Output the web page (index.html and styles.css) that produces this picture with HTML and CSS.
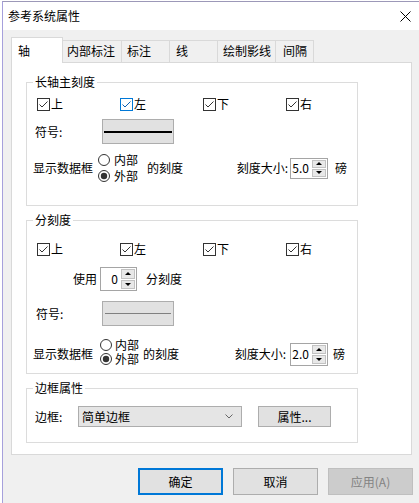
FILE: index.html
```html
<!DOCTYPE html>
<html lang="zh-CN">
<head>
<meta charset="utf-8">
<title>参考系统属性</title>
<link rel="stylesheet" href="styles.css">
</head>
<body>
<div class="window">
  <div class="titlebar">
    <span class="title">参考系统属性</span>
    <svg class="close" width="11" height="11" viewBox="0 0 11 11"><path d="M0.5 0.5 L10.5 10.5 M10.5 0.5 L0.5 10.5" stroke="#000" stroke-width="1" fill="none"/></svg>
  </div>
  <div class="client">
    <div class="tabs">
      <div class="tab active t-axis">轴</div>
      <div class="tab t-inner">内部标注</div>
      <div class="tab t-label">标注</div>
      <div class="tab t-line">线</div>
      <div class="tab t-hatch">绘制影线</div>
      <div class="tab t-gap">间隔</div>
    </div>
    <div class="panel">
      <div class="group g-major">
        <div class="legend">长轴主刻度</div>
        <div class="checks">
          <div class="chk"><svg width="13" height="13" viewBox="0 0 13 13"><rect x="0.5" y="0.5" width="12" height="12" fill="#fff" stroke="#333"/><path d="M2.5 6.5 L5 9 L10.5 3.5" stroke="#333" stroke-width="1" fill="none"/></svg><span>上</span></div>
          <div class="chk"><svg width="13" height="13" viewBox="0 0 13 13"><rect x="0.5" y="0.5" width="12" height="12" fill="#fff" stroke="#0078d7"/><path d="M2.5 6.5 L5 9 L10.5 3.5" stroke="#0a5fb4" stroke-width="1" fill="none"/></svg><span>左</span></div>
          <div class="chk"><svg width="13" height="13" viewBox="0 0 13 13"><rect x="0.5" y="0.5" width="12" height="12" fill="#fff" stroke="#333"/><path d="M2.5 6.5 L5 9 L10.5 3.5" stroke="#333" stroke-width="1" fill="none"/></svg><span>下</span></div>
          <div class="chk"><svg width="13" height="13" viewBox="0 0 13 13"><rect x="0.5" y="0.5" width="12" height="12" fill="#fff" stroke="#333"/><path d="M2.5 6.5 L5 9 L10.5 3.5" stroke="#333" stroke-width="1" fill="none"/></svg><span>右</span></div>
        </div>
        <div class="symbol">
          <span class="sym-lbl">符号:</span>
          <div class="linebox"><span class="line thick"></span></div>
        </div>
        <div class="tick">
          <span>显示数据框</span>
          <div class="radios">
            <div class="radio"><svg width="12" height="12" viewBox="0 0 12 12"><circle cx="6" cy="6" r="5.5" fill="#fff" stroke="#333"/></svg><span>内部</span></div>
            <div class="radio"><svg width="12" height="12" viewBox="0 0 12 12"><circle cx="6" cy="6" r="5.5" fill="#fff" stroke="#333"/><circle cx="6" cy="6" r="3.2" fill="#333"/></svg><span>外部</span></div>
          </div>
          <span class="of-tick">的刻度</span>
          <span class="size-lbl">刻度大小:</span>
          <div class="spin">
            <span class="val">5.0</span>
            <div class="spin-btns"><span class="sbtn"><i class="up"></i></span><span class="sbtn"><i class="dn"></i></span></div>
          </div>
          <span class="unit">磅</span>
        </div>
      </div>

      <div class="group g-minor">
        <div class="legend">分刻度</div>
        <div class="checks">
          <div class="chk"><svg width="13" height="13" viewBox="0 0 13 13"><rect x="0.5" y="0.5" width="12" height="12" fill="#fff" stroke="#333"/><path d="M2.5 6.5 L5 9 L10.5 3.5" stroke="#333" stroke-width="1" fill="none"/></svg><span>上</span></div>
          <div class="chk"><svg width="13" height="13" viewBox="0 0 13 13"><rect x="0.5" y="0.5" width="12" height="12" fill="#fff" stroke="#333"/><path d="M2.5 6.5 L5 9 L10.5 3.5" stroke="#333" stroke-width="1" fill="none"/></svg><span>左</span></div>
          <div class="chk"><svg width="13" height="13" viewBox="0 0 13 13"><rect x="0.5" y="0.5" width="12" height="12" fill="#fff" stroke="#333"/><path d="M2.5 6.5 L5 9 L10.5 3.5" stroke="#333" stroke-width="1" fill="none"/></svg><span>下</span></div>
          <div class="chk"><svg width="13" height="13" viewBox="0 0 13 13"><rect x="0.5" y="0.5" width="12" height="12" fill="#fff" stroke="#333"/><path d="M2.5 6.5 L5 9 L10.5 3.5" stroke="#333" stroke-width="1" fill="none"/></svg><span>右</span></div>
        </div>
        <div class="use">
          <span>使用</span>
          <div class="spin spin-use">
            <span class="val">0</span>
            <div class="spin-btns"><span class="sbtn"><i class="up"></i></span><span class="sbtn"><i class="dn"></i></span></div>
          </div>
          <span class="use-unit">分刻度</span>
        </div>
        <div class="symbol">
          <span class="sym-lbl">符号:</span>
          <div class="linebox"><span class="line thin"></span></div>
        </div>
        <div class="tick">
          <span>显示数据框</span>
          <div class="radios">
            <div class="radio"><svg width="12" height="12" viewBox="0 0 12 12"><circle cx="6" cy="6" r="5.5" fill="#fff" stroke="#333"/></svg><span>内部</span></div>
            <div class="radio"><svg width="12" height="12" viewBox="0 0 12 12"><circle cx="6" cy="6" r="5.5" fill="#fff" stroke="#333"/><circle cx="6" cy="6" r="3.2" fill="#333"/></svg><span>外部</span></div>
          </div>
          <span class="of-tick">的刻度</span>
          <span class="size-lbl">刻度大小:</span>
          <div class="spin spin-tall">
            <span class="val">2.0</span>
            <div class="spin-btns"><span class="sbtn"><i class="up"></i></span><span class="sbtn"><i class="dn"></i></span></div>
          </div>
          <span class="unit">磅</span>
        </div>
      </div>

      <div class="group g-border">
        <div class="legend">边框属性</div>
        <div class="border-row">
          <span class="bd-lbl">边框:</span>
          <div class="combo">
            <span>简单边框</span>
            <svg width="8" height="5" viewBox="0 0 8 5"><path d="M0.5 0.5 L4 4 L7.5 0.5" stroke="#666" stroke-width="1" fill="none"/></svg>
          </div>
          <div class="btn-prop">属性...</div>
        </div>
      </div>
    </div>
    <div class="buttons">
      <div class="btn default">确定</div>
      <div class="btn">取消</div>
      <div class="btn disabled">应用(A)</div>
    </div>
  </div>
</div>
</body>
</html>
```

FILE: styles.css
```css
* { box-sizing: border-box; }
html, body { margin: 0; padding: 0; }
body {
  width: 419px;
  height: 503px;
  overflow: hidden;
  background: #fff;
  color: #000;
  font-family: "Noto Sans CJK SC", "Microsoft YaHei", sans-serif;
  font-size: 12px;
  line-height: 16px;
}
.window {
  margin: 1px 0 0 2px;
  height: 502px;
  border-left: 1px solid #a6a0dc;
  border-top: 1px solid #9c98b8;
  background: #f0f0f0;
}
.titlebar {
  height: 28px;
  background: #fff;
  display: flex;
  align-items: center;
  justify-content: space-between;
  padding: 0 8px 0 5px;
}
.close { display: block; }
.client { padding: 7px 0 0 8px; }

/* tabs */
.tabs {
  position: relative;
  z-index: 1;
  display: flex;
  align-items: flex-start;
  height: 26px;
  margin-bottom: -1px;
}
.tab {
  height: 22px;
  margin-top: 3px;
  padding-top: 2px;
  border-top: 1px solid #d9d9d9;
  border-right: 1px solid #d9d9d9;
  background: #f0f0f0;
  white-space: nowrap;
}
.tab.active {
  height: 26px;
  margin-top: 0;
  padding-top: 5px;
  border-left: 1px solid #d9d9d9;
  background: #fff;
}
.t-axis { width: 52px; padding-left: 6px; }
.t-inner { width: 59px; padding-left: 4px; }
.t-label { width: 48px; padding-left: 5px; }
.t-line { width: 48px; padding-left: 6px; }
.t-hatch { width: 58px; padding-left: 5px; }
.t-gap { width: 38px; padding-left: 7px; }

/* panel */
.panel {
  width: 401px;
  border: 1px solid #d9d9d9;
  background: #fff;
  padding: 19px 0 11px 14px;
}
.group {
  width: 332px;
  border: 1px solid #dcdcdc;
}
.group + .group { margin-top: 14px; }
.legend {
  display: table;
  margin: -9px 0 0 6px;
  padding: 0 2px;
  background: #fff;
  line-height: 16px;
}
.g-major { padding-bottom: 21px; }
.g-minor { padding-bottom: 5px; }
.g-border { padding-bottom: 15px; }

.checks {
  display: grid;
  grid-template-columns: repeat(4, 83px);
  height: 16px;
  padding-left: 10px;
}
.g-major .checks { margin-top: 6px; }
.g-minor .checks { margin-top: 13px; }
.chk { display: flex; align-items: center; gap: 1px; }
.chk svg { display: block; flex: none; }

.symbol {
  display: flex;
  align-items: center;
  height: 25px;
  padding-left: 8px;
}
.g-major .symbol { margin-top: 7px; }
.g-minor .symbol { margin-top: 10px; padding-left: 9px; }
.sym-lbl { width: 67px; }
.g-minor .sym-lbl { width: 66px; }
.linebox {
  width: 72px;
  height: 25px;
  background: #e1e1e1;
  border: 1px solid #adadad;
  display: flex;
  align-items: center;
  padding: 0 1px;
}
.line { flex: 1; }
.line.thick { height: 2px; background: #000; }
.line.thin { height: 1px; background: #808080; margin: 0 1px; }

.tick {
  display: flex;
  align-items: center;
  padding: 0 10px 0 6px;
}
.g-major .tick { height: 32px; margin-top: 8px; }
.g-minor .tick { height: 28px; margin-top: 14px; padding-right: 12px; }
.radios { display: flex; flex-direction: column; margin-left: 5px; }
.g-minor .radios { margin-left: 7px; margin-bottom: 4px; }
.radio { display: flex; align-items: center; gap: 4px; height: 16px; }
.g-minor .radio { height: 14px; gap: 3px; line-height: 14px; }
.g-minor .radio span { line-height: 14px; height: 14px; }
.radio svg { display: block; flex: none; }
.of-tick { margin-left: 9px; }
.g-minor .of-tick { margin-left: 4px; }
.size-lbl { margin-left: auto; margin-right: 2px; }
.g-minor .size-lbl { margin-right: 4px; }
.unit { margin-left: 7px; }
.g-minor .unit { margin-left: 5px; }

.spin {
  width: 38px;
  height: 21px;
  border: 1px solid #a5a5a5;
  background: #fff;
  display: flex;
}
.spin-tall { height: 23px; }
.spin-use { width: 37px; height: 24px; }
.spin .val {
  flex: 1;
  text-align: right;
  padding-right: 3px;
  align-self: center;
}
.spin-btns {
  width: 15px;
  display: flex;
  flex-direction: column;
  gap: 1px;
  padding: 1px 1px 1px 0;
}
.sbtn {
  flex: 1;
  background: #e8e8e8;
  border: 1px solid #c2c2c2;
  display: flex;
  align-items: center;
  justify-content: center;
}
.sbtn i { display: block; width: 0; height: 0; border-left: 3px solid transparent; border-right: 3px solid transparent; }
.sbtn .up { border-bottom: 3px solid #000; }
.sbtn .dn { border-top: 3px solid #000; }

.use {
  display: flex;
  align-items: center;
  height: 24px;
  margin-top: 10px;
  padding-left: 46px;
}
.use .spin { margin-left: 3px; }
.use-unit { margin-left: 9px; }

.border-row {
  display: flex;
  align-items: center;
  height: 21px;
  margin-top: 10px;
  padding-left: 8px;
}
.bd-lbl { width: 43px; }
.combo {
  width: 164px;
  height: 21px;
  background: #e5e5e5;
  border: 1px solid #adadad;
  display: flex;
  align-items: center;
  justify-content: space-between;
  padding: 0 8px 0 3px;
}
.combo svg { display: block; }
.btn-prop {
  margin-left: 16px;
  width: 73px;
  height: 21px;
  background: #e1e1e1;
  border: 1px solid #adadad;
  display: flex;
  align-items: center;
  justify-content: center;
}

.buttons {
  display: flex;
  justify-content: flex-end;
  gap: 10px;
  margin-top: 13px;
  padding-right: 6px;
}
.btn {
  width: 85px;
  height: 27px;
  background: #e1e1e1;
  border: 1px solid #adadad;
  display: flex;
  align-items: center;
  justify-content: center;
}
.btn.default { border: 2px solid #0078d7; }
.btn.disabled { background: #cccccc; border-color: #bfbfbf; color: #838383; }
```
